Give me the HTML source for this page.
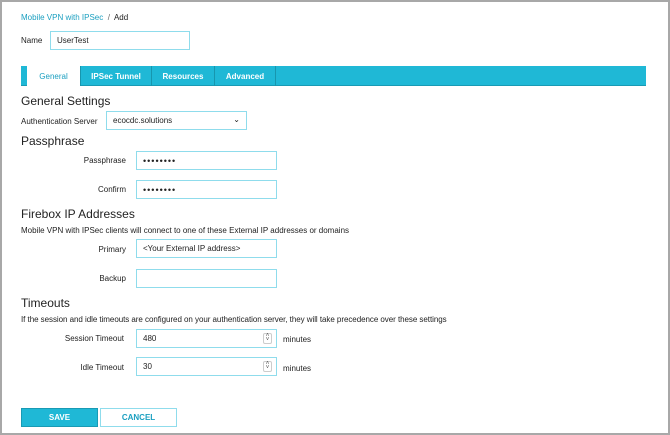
<!DOCTYPE html><html><head><style>
*{box-sizing:border-box;margin:0;padding:0}
body{width:670px;height:435px;background:#fff;font-family:"Liberation Sans",sans-serif;font-size:8px;color:#222;position:relative;overflow:hidden}
.frame{position:absolute;left:0;top:0;width:670px;height:435px;border:2px solid #a8a8a8}
.a{position:absolute;white-space:nowrap}
.in{position:absolute;border:1px solid #8fdcec;background:#fff;padding-left:6px;display:flex;align-items:center;font-size:8px}
h2{position:absolute;font-weight:normal;font-size:12px;color:#222}
.tabs{position:absolute;left:21px;top:66px;width:625px;height:20px;background:#1fb8d6;border-bottom:1px solid #199ab4}
.tab{position:absolute;top:0;height:20px;color:#fff;font-weight:bold;font-size:8px;display:flex;align-items:center;justify-content:center;border-right:1px solid #1796ae}
.sp{position:absolute;right:4px;top:3px;width:9px;height:11px;border:1px solid #ccc;border-radius:2px;font-size:6px;line-height:4px;text-align:center;color:#555}
</style></head><body>
<div class="frame"></div>
<div class="a" style="left:21px;top:13px;font-size:8px"><span style="color:#1a9fc0">Mobile VPN with IPSec</span> <span style="color:#666">&nbsp;/&nbsp;</span> Add</div>
<div class="a" style="left:21px;top:36px">Name</div>
<div class="in" style="left:50px;top:31px;width:140px;height:19px">UserTest</div>
<div class="tabs">
<div class="tab" style="left:0;width:6px;border-right:none"></div>
<div class="tab" style="left:6px;width:54px;background:#fff;color:#1a9fc0;font-weight:normal;border-right:1px solid #1796ae">General</div>
<div class="tab" style="left:60px;width:71px">IPSec Tunnel</div>
<div class="tab" style="left:131px;width:63px">Resources</div>
<div class="tab" style="left:194px;width:61px">Advanced</div>
</div>
<h2 style="left:21px;top:94px">General Settings</h2>
<div class="a" style="left:21px;top:117px">Authentication Server</div>
<div class="in" style="left:106px;top:111px;width:141px;height:19px">ecocdc.solutions<span style="position:absolute;right:6px;top:3px;font-size:8px">&#8964;</span></div>
<h2 style="left:21px;top:134px">Passphrase</h2>
<div class="a" style="left:70px;top:156px;width:56px;text-align:right">Passphrase</div>
<div class="in" style="left:136px;top:151px;width:141px;height:19px;letter-spacing:1px;font-size:9px">••••••••</div>
<div class="a" style="left:70px;top:185px;width:56px;text-align:right">Confirm</div>
<div class="in" style="left:136px;top:180px;width:141px;height:19px;letter-spacing:1px;font-size:9px">••••••••</div>
<h2 style="left:21px;top:207px">Firebox IP Addresses</h2>
<div class="a" style="left:21px;top:226px">Mobile VPN with IPSec clients will connect to one of these External IP addresses or domains</div>
<div class="a" style="left:70px;top:245px;width:56px;text-align:right">Primary</div>
<div class="in" style="left:136px;top:239px;width:141px;height:19px">&lt;Your External IP address&gt;</div>
<div class="a" style="left:70px;top:274px;width:56px;text-align:right">Backup</div>
<div class="in" style="left:136px;top:269px;width:141px;height:19px"></div>
<h2 style="left:21px;top:296px">Timeouts</h2>
<div class="a" style="left:21px;top:315px;letter-spacing:-0.05px">If the session and idle timeouts are configured on your authentication server, they will take precedence over these settings</div>
<div class="a" style="left:50px;top:334px;width:74px;text-align:right">Session Timeout</div>
<div class="in" style="left:136px;top:329px;width:141px;height:19px">480<div class="sp">˄<br>˅</div></div>
<div class="a" style="left:283px;top:335px">minutes</div>
<div class="a" style="left:50px;top:363px;width:74px;text-align:right">Idle Timeout</div>
<div class="in" style="left:136px;top:357px;width:141px;height:19px">30<div class="sp">˄<br>˅</div></div>
<div class="a" style="left:283px;top:364px">minutes</div>
<div class="a" style="left:21px;top:408px;width:77px;height:19px;background:#1fb8d6;border:1px solid #199ab4;color:#fff;font-weight:bold;display:flex;align-items:center;justify-content:center">SAVE</div>
<div class="a" style="left:100px;top:408px;width:77px;height:19px;border:1px solid #8fdcec;color:#1a9fc0;font-weight:bold;display:flex;align-items:center;justify-content:center">CANCEL</div>
</body></html>
